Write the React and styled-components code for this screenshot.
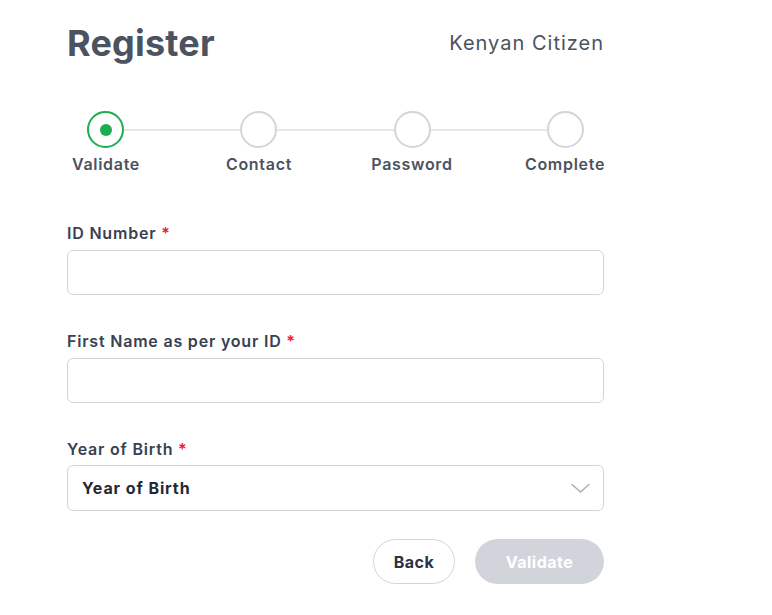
import styled, { createGlobalStyle } from 'styled-components';

const GlobalStyle = createGlobalStyle`
  body {
    margin: 0;
    background: #ffffff;
    font-family: Inter, "Liberation Sans", sans-serif;
  }
  * { box-sizing: border-box; }
`;

const steps = ['Validate', 'Contact', 'Password', 'Complete'];

function Chevron() {
  return (
    <svg width="19" height="10" viewBox="0 0 19 10" fill="none">
      <path d="M1 1.5l8.5 7.5 8.5-7.5" stroke="#a3a8b2" strokeWidth="1.3" strokeLinecap="round" strokeLinejoin="round" />
    </svg>
  );
}

export default function App() {
  return (
    <>
      <GlobalStyle />
      <Page>
        <Header>
          <Title>Register</Title>
          <Subtitle>Kenyan Citizen</Subtitle>
        </Header>

        <Stepper>
          <CircleRow>
            {steps.map((s, i) => (
              <Step key={s} $last={i === steps.length - 1}>
                <Circle $active={i === 0}>{i === 0 && <Dot />}</Circle>
                {i < steps.length - 1 && <Connector />}
              </Step>
            ))}
          </CircleRow>
          <LabelRow>
            {steps.map((s) => (
              <StepLabel key={s}>{s}</StepLabel>
            ))}
          </LabelRow>
        </Stepper>

        <Form>
          <Field>
            <Label>ID Number <Req>*</Req></Label>
            <Input />
          </Field>
          <Field>
            <Label>First Name as per your ID <Req>*</Req></Label>
            <Input />
          </Field>
          <Field>
            <Label>Year of Birth <Req>*</Req></Label>
            <Select>
              <span>Year of Birth</span>
              <Chevron />
            </Select>
          </Field>
        </Form>

        <Actions>
          <BackButton>Back</BackButton>
          <SubmitButton disabled>Validate</SubmitButton>
        </Actions>
      </Page>
    </>
  );
}

const Page = styled.div`
  width: 537px;
  margin-left: 67px;
  padding-top: 21px;
`;

const Header = styled.div`
  display: flex;
  justify-content: space-between;
  align-items: center;
  height: 44px;
`;

const Title = styled.h1`
  margin: 0;
  font-size: 36px;
  font-weight: 700;
  color: #4b5260;
  letter-spacing: 0.2px;
`;

const Subtitle = styled.div`
  font-size: 20px;
  color: #4b5260;
  letter-spacing: 1px;
`;

const Stepper = styled.div`
  margin-top: 46px;
`;

const CircleRow = styled.div`
  display: flex;
  padding: 0 20px;
`;

const Step = styled.div`
  display: flex;
  align-items: center;
  flex: ${(p) => (p.$last ? '0 0 auto' : '1')};
`;

const Circle = styled.div`
  width: 37px;
  height: 37px;
  border-radius: 50%;
  border: 2px solid ${(p) => (p.$active ? '#1cad4f' : '#d3d5db')};
  background: #fff;
  display: flex;
  align-items: center;
  justify-content: center;
  flex-shrink: 0;
`;

const Dot = styled.div`
  width: 12px;
  height: 12px;
  border-radius: 50%;
  background: #1cad4f;
`;

const Connector = styled.div`
  flex: 1;
  height: 2px;
  background: #e5e7eb;
`;

const LabelRow = styled.div`
  display: flex;
  justify-content: space-between;
  margin-top: 6px;
`;

const StepLabel = styled.div`
  width: 78px;
  text-align: center;
  font-size: 16px;
  font-weight: 600;
  line-height: 20px;
  color: #4b5260;
  white-space: nowrap;
  letter-spacing: 0.7px;
  display: flex;
  justify-content: center;
`;

const Form = styled.div`
  margin-top: 49px;
  display: flex;
  flex-direction: column;
  gap: 36px;
`;

const Field = styled.div`
  display: flex;
  flex-direction: column;
  gap: 7px;
`;

const Label = styled.label`
  font-size: 16px;
  font-weight: 600;
  line-height: 20px;
  color: #374151;
  letter-spacing: 0.8px;
`;

const Req = styled.span`
  color: #ef1c2e;
`;

const Input = styled.input`
  height: 45px;
  width: 100%;
  border: 1px solid #d1d5db;
  border-radius: 6px;
  outline: none;
  padding: 0 14px;
  font: inherit;
`;

const Select = styled.div`
  height: 46px;
  margin-top: -1px;
  border: 1px solid #d1d5db;
  border-radius: 6px;
  padding: 0 13px 0 14px;
  display: flex;
  align-items: center;
  justify-content: space-between;
  font-size: 16px;
  font-weight: 700;
  color: #1f2937;
  letter-spacing: 0.9px;
`;

const Actions = styled.div`
  display: flex;
  justify-content: flex-end;
  gap: 20px;
  margin-top: 28px;
`;

const BackButton = styled.button`
  height: 45px;
  width: 82px;
  border-radius: 23px;
  border: 1px solid #d1d5db;
  background: #fff;
  font-family: inherit;
  font-size: 16px;
  font-weight: 700;
  color: #2d3340;
  letter-spacing: 0.5px;
`;

const SubmitButton = styled.button`
  height: 45px;
  width: 129px;
  border-radius: 23px;
  border: none;
  background: #d1d5db;
  font-family: inherit;
  font-size: 16px;
  font-weight: 700;
  color: #ffffff;
  letter-spacing: 0.5px;
`;
